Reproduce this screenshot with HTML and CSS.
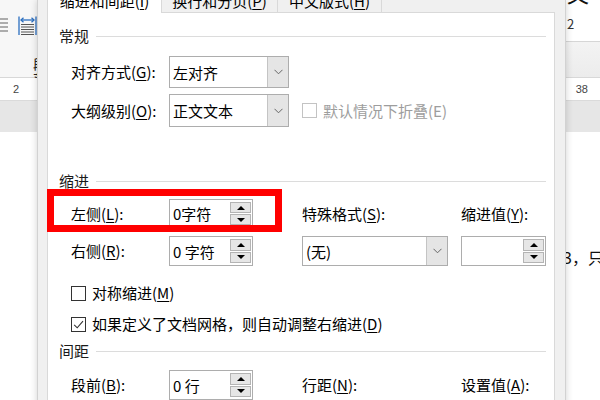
FILE: index.html
```html
<!DOCTYPE html>
<html lang="zh-CN">
<head>
<meta charset="utf-8">
<title>段落</title>
<link rel="stylesheet" href="styles.css">
</head>
<body>
<div class="word">
  <div class="ribbon">
    <div class="rb-left">
      <div class="rb-icons">
        <svg class="ic-lines" width="8" height="16" viewBox="0 0 8 16"><g stroke="#7a7a7a" stroke-width="1.2"><line x1="0" y1="2" x2="8" y2="2"/><line x1="0" y1="6" x2="8" y2="6"/><line x1="0" y1="10" x2="8" y2="10"/><line x1="0" y1="14" x2="8" y2="14"/></g></svg>
        <svg class="ic-dist" width="19" height="20" viewBox="0 0 19 20"><g stroke="#2b6fc0" stroke-width="1.3" fill="none"><line x1="1" y1="0.5" x2="1" y2="19"/><line x1="18" y1="0.5" x2="18" y2="19"/><line x1="3" y1="4" x2="16" y2="4"/><polyline points="5.5,1.8 3,4 5.5,6.2"/><polyline points="13.5,1.8 16,4 13.5,6.2"/></g><g stroke="#555" stroke-width="1"><line x1="3" y1="8.5" x2="16" y2="8.5"/><line x1="3" y1="11" x2="16" y2="11"/><line x1="3" y1="13.5" x2="16" y2="13.5"/><line x1="3" y1="16" x2="16" y2="16"/><line x1="3" y1="18.5" x2="16" y2="18.5"/></g></svg>
      </div>
      <div class="rb-label">段落</div>
    </div>
    <div class="rb-right">
      <div class="rb-top"><span class="rb-wen">文</span><span class="rb-two">2</span></div>
      <div class="rb-band"></div>
    </div>
  </div>
  <div class="ruler"><span>2</span><span>38</span></div>
  <div class="band"></div>
  <div class="page"><p class="doc-line">3，只是</p></div>
</div>

<div class="dialog">
  <div class="tabs">
    <div class="tab tab-active"><span>缩进和间距(<u>I</u>)</span></div>
    <div class="tab tab-2"><span>换行和分页(<u>P</u>)</span></div>
    <div class="tab tab-3"><span>中文版式(<u>H</u>)</span></div>
  </div>
  <div class="panel">
    <div class="head head-1"><span>常规</span><i class="rule"></i></div>

    <div class="grid row-g1">
      <span class="lbl">对齐方式(<u>G</u>):</span>
      <div class="select sel-general"><span class="val">左对齐</span><span class="sel-btn"><svg width="9" height="6" viewBox="0 0 9 6"><polyline points="0.5,0.8 4.5,4.8 8.5,0.8" fill="none" stroke="#666" stroke-width="1"/></svg></span></div>
    </div>
    <div class="grid row-g2">
      <span class="lbl">大纲级别(<u>O</u>):</span>
      <div class="select sel-general"><span class="val">正文文本</span><span class="sel-btn"><svg width="9" height="6" viewBox="0 0 9 6"><polyline points="0.5,0.8 4.5,4.8 8.5,0.8" fill="none" stroke="#666" stroke-width="1"/></svg></span></div>
      <label class="check disabled"><span class="box"></span><span>默认情况下折叠(E)</span></label>
    </div>

    <div class="head head-2"><span>缩进</span><i class="rule"></i></div>

    <div class="grid row-ia">
      <span class="lbl">左侧(<u>L</u>):</span>
      <div class="spin"><span class="val">0字符</span><span class="spin-btns"><span class="sb"><i class="tri-up"></i></span><span class="sb"><i class="tri-down"></i></span></span></div>
      <span class="lbl">特殊格式(<u>S</u>):</span>
      <span class="lbl">缩进值(<u>Y</u>):</span>
    </div>
    <div class="grid row-ib">
      <span class="lbl">右侧(<u>R</u>):</span>
      <div class="spin"><span class="val">0 字符</span><span class="spin-btns"><span class="sb"><i class="tri-up"></i></span><span class="sb"><i class="tri-down"></i></span></span></div>
      <div class="select sel-special"><span class="val">(无)</span><span class="sel-btn"><svg width="9" height="6" viewBox="0 0 9 6"><polyline points="0.5,0.8 4.5,4.8 8.5,0.8" fill="none" stroke="#666" stroke-width="1"/></svg></span></div>
      <div class="spin spin-wide"><span class="val"></span><span class="spin-btns"><span class="sb"><i class="tri-up"></i></span><span class="sb"><i class="tri-down"></i></span></span></div>
    </div>

    <label class="check cb-1"><span class="box"></span><span>对称缩进(<u>M</u>)</span></label>
    <label class="check cb-2"><span class="box"><svg width="13" height="13" viewBox="0 0 13 13"><polyline points="2.2,6.8 5.2,9.8 11,3.2" fill="none" stroke="#333" stroke-width="1.1"/></svg></span><span>如果定义了文档网格，则自动调整右缩进(<u>D</u>)</span></label>

    <div class="head head-3"><span>间距</span><i class="rule"></i></div>

    <div class="grid row-s1">
      <span class="lbl">段前(<u>B</u>):</span>
      <div class="spin"><span class="val">0 行</span><span class="spin-btns"><span class="sb"><i class="tri-up"></i></span><span class="sb"><i class="tri-down"></i></span></span></div>
      <span class="lbl">行距(<u>N</u>):</span>
      <span class="lbl">设置值(<u>A</u>):</span>
    </div>

    <div class="highlight"></div>
  </div>
</div>
</body>
</html>
```

FILE: styles.css
```css
html, body {
  margin: 0;
  padding: 0;
}
body {
  width: 600px;
  height: 400px;
  overflow: hidden;
  position: relative;
  background: #ffffff;
  font-family: "Noto Sans CJK SC", "Noto Sans", sans-serif;
  color: #000;
}

/* ---------- Word window behind ---------- */
.word {
  display: flex;
  flex-direction: column;
  height: 400px;
}
.ribbon {
  height: 77px;
  border-bottom: 1px solid #d8d8d8;
  background: #f7f7f7;
  display: flex;
  justify-content: space-between;
}
.rb-left {
  width: 60px;
}
.rb-icons {
  display: flex;
  align-items: flex-start;
  gap: 10px;
  padding-top: 16px;
}
.ic-lines { margin-top: 1px; }
.rb-label {
  font-size: 14px;
  line-height: 16px;
  color: #222;
  margin: 19px 0 0 33px;
}
.rb-right {
  width: 34px;
  display: flex;
  flex-direction: column;
}
.rb-top {
  height: 42px;
  background: #ffffff;
  border-bottom: 1px solid #d6d6d6;
  box-sizing: border-box;
  display: flex;
  flex-direction: column;
  overflow: hidden;
}
.rb-wen {
  font-size: 22px;
  line-height: 22px;
  margin-top: -19px;
  margin-left: 1px;
  color: #111;
}
.rb-two {
  font-size: 13px;
  line-height: 14px;
  margin-top: 14px;
  margin-left: 1px;
  color: #333;
}
.rb-band {
  flex: 1;
  background: linear-gradient(#f3f3f3, #ececec);
}
.ruler {
  height: 22px;
  background: #ffffff;
  display: flex;
  justify-content: space-between;
  align-items: center;
  font-family: "Liberation Sans", sans-serif;
  font-size: 11px;
  color: #444;
  padding: 0 12px 0 13px;
}
.band {
  height: 31px;
  background: #e6e6e6;
  border-top: 1px solid #dadada;
}
.page {
  flex: 1;
  background: #ffffff;
}
.doc-line {
  margin: 115px 0 0 0;
  padding-left: 563px;
  white-space: nowrap;
  font-size: 16px;
  line-height: 20px;
  color: #111;
}

/* ---------- Dialog ---------- */
.dialog {
  position: absolute;
  left: 37px;
  top: 0;
  width: 529px;
  height: 420px;
  box-sizing: border-box;
  background: #f0f0f0;
  border-left: 1px solid #d2d2d2;
  border-right: 1px solid #d2d2d2;
  box-shadow: 0 0 7px rgba(0, 0, 0, 0.18);
  padding: 0 10px 0 9px;
  font-size: 15px;
}
.tabs {
  height: 12px;
  display: flex;
  align-items: flex-end;
}
.tab {
  height: 28px;
  box-sizing: border-box;
  border: 1px solid #d9d9d9;
  border-bottom: none;
  margin-left: -1px;
  background: #f0f0f0;
  display: flex;
  align-items: flex-end;
  justify-content: center;
  line-height: 17px;
  padding-bottom: 3px;
  color: #000;
  white-space: nowrap;
}
.tab-active {
  width: 115px;
  margin-left: 0;
  background: #ffffff;
  position: relative;
  z-index: 1;
  height: 29px;
  margin-bottom: -1px;
  padding-bottom: 4px;
}
.tab-2 { width: 117px; }
.tab-3 { width: 105px; }

.panel {
  height: 420px;
  box-sizing: border-box;
  background: #ffffff;
  border: 1px solid #d9d9d9;
  padding: 0 8px 0 11px;
  position: relative;
}
.head {
  height: 20px;
  display: flex;
  align-items: center;
  gap: 7px;
  color: #1a1a1a;
}
.head span { line-height: 20px; }
.rule {
  flex: 1;
  height: 1px;
  background: #dcdcdc;
}
.head-1 { margin-top: 13px; }
.head-2 { margin-top: 44px; }
.head-3 { margin-top: 7px; }

.grid {
  display: grid;
  grid-template-columns: 98px 133px 159px 85px;
  align-items: center;
  margin-left: 12px;
}
.row-g1 { margin-top: 10px; height: 32px; }
.row-g2 { margin-top: 6px; height: 33px; }
.row-ia { margin-top: 8px; height: 29px; }
.row-ib { margin-top: 8px; height: 30px; }
.row-s1 { margin-top: 9px; height: 30px; }

.lbl {
  line-height: 20px;
  white-space: nowrap;
}

.select {
  display: flex;
  height: 100%;
  box-sizing: border-box;
  border: 1px solid #adadad;
  background: #fff;
}
.sel-general { width: 120px; }
.sel-special { width: 146px; }
.val {
  flex: 1;
  display: flex;
  align-items: center;
  padding-left: 3px;
  white-space: nowrap;
}
.sel-btn {
  width: 20px;
  background: #e5e5e5;
  border-left: 1px solid #c4c4c4;
  display: flex;
  align-items: center;
  justify-content: center;
}

.spin {
  display: flex;
  width: 84px;
  height: 100%;
  box-sizing: border-box;
  border: 1px solid #adadad;
  background: #fff;
}
.spin-wide { width: 85px; }
.spin-btns {
  width: 21px;
  display: flex;
  flex-direction: column;
  gap: 1px;
  padding: 2px 1px 2px 0;
}
.sb {
  flex: 1;
  background: #e6e6e6;
  border: 1px solid #b4b4b4;
  display: flex;
  align-items: center;
  justify-content: center;
}
.tri-up {
  width: 0;
  height: 0;
  border-left: 4px solid transparent;
  border-right: 4px solid transparent;
  border-bottom: 4px solid #000;
}
.tri-down {
  width: 0;
  height: 0;
  border-left: 4px solid transparent;
  border-right: 4px solid transparent;
  border-top: 4px solid #000;
}

.check {
  display: flex;
  align-items: center;
  gap: 6px;
  height: 20px;
  line-height: 20px;
  white-space: nowrap;
}
.box {
  width: 15px;
  height: 15px;
  box-sizing: border-box;
  border: 1px solid #333;
  background: #fff;
  display: flex;
  align-items: center;
  justify-content: center;
  flex: none;
}
.check.disabled { color: #9d9d9d; }
.check.disabled .box { border-color: #c3c3c3; }
.cb-1 { margin: 17px 0 0 12px; }
.cb-2 { margin: 11px 0 0 12px; }

.highlight {
  position: absolute;
  left: -1px;
  top: 176px;
  width: 235px;
  height: 43px;
  box-sizing: border-box;
  border: 7px solid #ff0000;
}
u { text-decoration-thickness: 1px; text-underline-offset: 2px; }
```
